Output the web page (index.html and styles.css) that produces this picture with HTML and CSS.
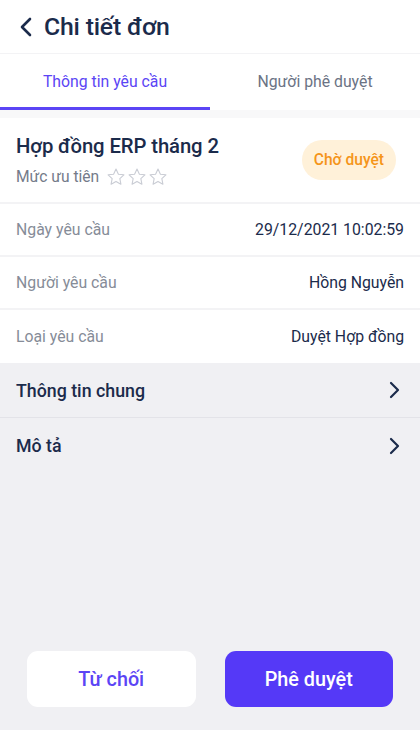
FILE: index.html
```html
<!DOCTYPE html>
<html lang="vi">
<head>
<meta charset="utf-8">
<link rel="stylesheet" href="styles.css">
</head>
<body>
<div class="app">
  <header class="header">
    <svg class="back" width="14" height="20" viewBox="0 0 14 20"><path d="M11 2 L3 10 L11 18" fill="none" stroke="#1b2b4b" stroke-width="2.6" stroke-linecap="round" stroke-linejoin="round"/></svg>
    <h1 class="title">Chi tiết đơn</h1>
  </header>
  <nav class="tabs">
    <div class="tab active">Thông tin yêu cầu</div>
    <div class="tab">Người phê duyệt</div>
  </nav>
  <div class="spacer"></div>
  <section class="card">
    <div class="summary">
      <div class="summary-text">
        <div class="doc-title">Hợp đồng ERP tháng 2</div>
        <div class="priority">
          <span>Mức ưu tiên</span>
          <span class="stars">
            <svg width="20" height="20" viewBox="0 0 24 24"><path d="M12 2.5l2.9 6.1 6.6.8-4.9 4.6 1.3 6.6L12 17.3l-5.9 3.3 1.3-6.6-4.9-4.6 6.6-.8z" fill="none" stroke="#c9ccd4" stroke-width="1.3" stroke-linejoin="round"/></svg>
            <svg width="20" height="20" viewBox="0 0 24 24"><path d="M12 2.5l2.9 6.1 6.6.8-4.9 4.6 1.3 6.6L12 17.3l-5.9 3.3 1.3-6.6-4.9-4.6 6.6-.8z" fill="none" stroke="#c9ccd4" stroke-width="1.3" stroke-linejoin="round"/></svg>
            <svg width="20" height="20" viewBox="0 0 24 24"><path d="M12 2.5l2.9 6.1 6.6.8-4.9 4.6 1.3 6.6L12 17.3l-5.9 3.3 1.3-6.6-4.9-4.6 6.6-.8z" fill="none" stroke="#c9ccd4" stroke-width="1.3" stroke-linejoin="round"/></svg>
          </span>
        </div>
      </div>
      <span class="badge">Chờ duyệt</span>
    </div>
    <div class="row"><span class="label">Ngày yêu cầu</span><span class="value">29/12/2021 10:02:59</span></div>
    <div class="row"><span class="label">Người yêu cầu</span><span class="value">Hồng Nguyễn</span></div>
    <div class="row"><span class="label">Loại yêu cầu</span><span class="value">Duyệt Hợp đồng</span></div>
  </section>
  <section class="sections">
    <div class="link-row"><span>Thông tin chung</span><svg width="12" height="18" viewBox="0 0 12 18"><path d="M3 2 L10 9 L3 16" fill="none" stroke="#1b2b4b" stroke-width="2.2" stroke-linecap="round" stroke-linejoin="round"/></svg></div>
    <div class="link-row"><span>Mô tả</span><svg width="12" height="18" viewBox="0 0 12 18"><path d="M3 2 L10 9 L3 16" fill="none" stroke="#1b2b4b" stroke-width="2.2" stroke-linecap="round" stroke-linejoin="round"/></svg></div>
  </section>
  <div class="fill"></div>
  <footer class="actions">
    <button class="btn reject">Từ chối</button>
    <button class="btn approve">Phê duyệt</button>
  </footer>
</div>
</body>
</html>
```

FILE: styles.css
```css
* { box-sizing: border-box; }
html, body { margin: 0; padding: 0; }
body {
  font-family: Roboto, "Noto Sans", "Liberation Sans", sans-serif;
  background: #f0f0f3;
  color: #1b2b4b;
}
.app {
  width: 420px;
  height: 730px;
  display: flex;
  flex-direction: column;
  background: #f0f0f3;
}
.header {
  height: 54px;
  background: #fff;
  display: flex;
  align-items: center;
  padding-left: 19px;
  gap: 11px;
  border-bottom: 1px solid #f3f3f5;
}
.back { display: block; margin-top: 1px; }
.title {
  margin: 0;
  font-size: 24.8px;
  font-weight: 500;
  color: #1b2b4b;
  letter-spacing: -0.2px;
}
.tabs {
  display: flex;
  background: #fff;
  height: 56px;
}
.tab {
  flex: 1;
  display: flex;
  align-items: center;
  justify-content: center;
  font-size: 15.8px;
  color: #6b7384;
  border-bottom: 3px solid transparent;
  padding-top: 2px;
}
.tab.active {
  color: #5b45f5;
  border-bottom-color: #5b45f5;
}
.spacer { height: 8px; background: #f8f8f9; }
.card { background: #fff; }
.summary {
  display: flex;
  align-items: center;
  justify-content: space-between;
  padding: 12px 24px 12px 16px;
  border-bottom: 2px solid #f3f3f5;
  height: 86px;
}
.doc-title {
  font-size: 20.3px;
  font-weight: 500;
  color: #1b2b4b;
  letter-spacing: -0.1px;
}
.priority {
  display: flex;
  align-items: center;
  gap: 7px;
  margin-top: 9px;
  font-size: 15.6px;
  color: #747b8a;
}
.stars { display: flex; gap: 1px; }
.stars svg { display: block; }
.badge {
  background: #fff1d9;
  color: #f5951a;
  font-size: 15.6px;
  font-weight: 500;
  border-radius: 20px;
  padding: 0 12px;
  height: 40px;
  line-height: 40px;
}
.row {
  display: flex;
  justify-content: space-between;
  align-items: center;
  height: 53px;
  padding: 0 16px;
  font-size: 15.8px;
  border-bottom: 2px solid #f3f3f5;
}
.row:last-child { border-bottom: none; }
.label { color: #868c98; }
.value { color: #1b2b4b; }
.sections { background: #f0f0f3; }
.link-row {
  display: flex;
  justify-content: space-between;
  align-items: center;
  height: 55px;
  padding: 0 20px 0 16px;
  font-size: 17.8px;
  font-weight: 500;
  color: #1b2b4b;
  border-bottom: 1px solid #e3e3e8;
}
.link-row:last-child { border-bottom: none; }
.link-row svg { display: block; }
.fill { flex: 1; }
.actions {
  display: flex;
  gap: 29px;
  padding: 0 27px 23px 27px;
}
.btn {
  flex: 1;
  height: 56px;
  border-radius: 11px;
  border: none;
  font-family: inherit;
  font-size: 19.8px;
  font-weight: 500;
}
.reject { background: #fff; color: #5b45f5; }
.approve { background: #5539f7; color: #fff; }
```
